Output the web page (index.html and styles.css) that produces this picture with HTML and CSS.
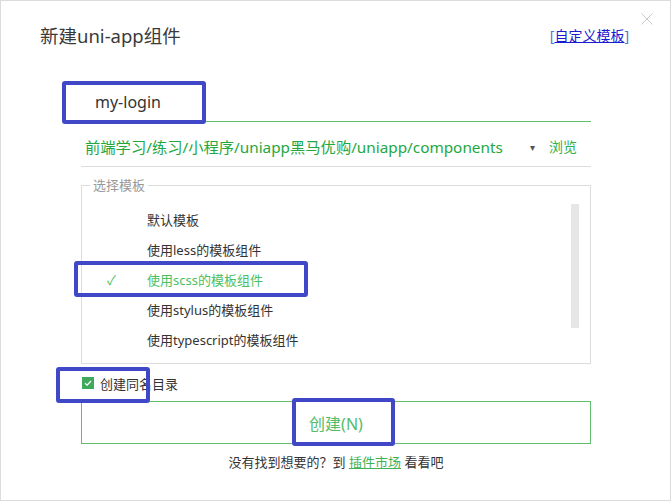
FILE: index.html
```html
<!DOCTYPE html>
<html>
<head>
    <title>新建uni-app组件</title>
    <link rel="stylesheet" href="styles.css">
</head>
<body>
<div class="dialog">
    <span class="close">
        <svg width="12" height="12" viewBox="0 0 12 12"><path d="M0.5 0.5L11.5 11.5M11.5 0.5L0.5 11.5" stroke="#c8c8c8" stroke-width="1" fill="none"/></svg>
    </span>
    <div class="head">
        <h1 class="title">新建uni-app组件</h1>
        <a class="custom-link"><span class="bracket">[</span><u>自定义模板</u><span class="bracket">]</span></a>
    </div>
    <form class="form">
        <div class="name-row">
            <span class="name-text">my-login</span>
        </div>
        <div class="path-row">
            <span class="path-text">前端学习/练习/小程序/uniapp黑马优购/uniapp/components</span>
            <span class="path-arrow">▾</span>
            <span class="browse">浏览</span>
        </div>
        <fieldset class="templates">
            <legend>选择模板</legend>
            <ul class="template-list">
                <li><span class="check"></span>默认模板</li>
                <li><span class="check"></span>使用less的模板组件</li>
                <li class="selected"><span class="check">✓</span>使用scss的模板组件</li>
                <li><span class="check"></span>使用stylus的模板组件</li>
                <li><span class="check"></span>使用typescript的模板组件</li>
            </ul>
            <div class="scrollbar"></div>
        </fieldset>
        <label class="dir-row">
            <span class="checkbox">
                <svg width="12" height="12" viewBox="0 0 12 12"><rect width="12" height="12" fill="#3ea95b"/><path d="M3 6.2L5.1 8.2L9 4" stroke="#fff" stroke-width="1.3" fill="none"/></svg>
            </span>
            创建同名目录
        </label>
        <button type="button" class="create-btn">创建(N)</button>
        <p class="footer-note">没有找到想要的？到 <a>插件市场</a> 看看吧</p>
    </form>

    <!-- highlight boxes drawn over the dialog -->
    <div class="mark mark-name"></div>
    <div class="mark mark-scss"></div>
    <div class="mark mark-dir"></div>
    <div class="mark mark-btn"></div>
</div>
</body>
</html>
```

FILE: styles.css
```css
body {
    margin: 0;
    font-family: "Noto Sans", "Noto Sans CJK SC", sans-serif;
    background-color: #fff;
    color: #333;
}
.dialog {
    position: relative;
    width: 671px;
    height: 501px;
    box-sizing: border-box;
    border: 1px solid #dcdcdc;
    background-color: #fff;
}
.close {
    position: absolute;
    top: 12px;
    right: 17px;
    width: 12px;
    height: 12px;
    line-height: 0;
}
.head {
    display: flex;
    justify-content: space-between;
    align-items: center;
    margin: 23px 41px 0 39px;
    height: 24px;
}
.title {
    margin: 0;
    font-size: 18.5px;
    font-weight: normal;
    line-height: 24px;
    color: #3a3a3a;
}
.custom-link {
    font-size: 14px;
    color: #1a1ad0;
    cursor: pointer;
    line-height: 20px;
}
.custom-link .bracket {
    color: #3c7fd6;
}
.form {
    margin: 0 79px 0 80px;
}
.name-row {
    margin-top: 34px;
    height: 39px;
    border-bottom: 1px solid #5fbf6d;
    display: flex;
    align-items: center;
    padding-left: 14px;
}
.name-text {
    font-size: 16px;
    color: #333;
}
.path-row {
    display: flex;
    align-items: center;
    padding: 10px 14px 4px 4px;
    line-height: 30px;
    border-bottom: 1px solid #dcdcdc;
    font-size: 15.3px;
}
.path-text {
    flex: 1;
    color: #23a83f;
}
.path-arrow {
    font-size: 10px;
    color: #555;
    margin-right: 14px;
}
.browse {
    color: #2fb04b;
    font-size: 14px;
}
.templates {
    margin: 10px 0 0 0;
    padding: 0;
    border: 1px solid #dcdcdc;
    display: flex;
    min-width: 0;
}
.templates legend {
    margin-left: 8px;
    padding: 0 3px;
    font-size: 13px;
    line-height: 16px;
    color: #999;
}
.template-list {
    list-style: none;
    margin: 0;
    padding: 11px 0 9px 25px;
    flex: 1;
}
.template-list li {
    display: flex;
    align-items: center;
    height: 30px;
    font-size: 13px;
    color: #333;
}
.template-list li.selected {
    color: #4cbf63;
}
.check {
    width: 40px;
    font-size: 13px;
    color: #4cbf63;
}
.scrollbar {
    width: 8px;
    height: 124px;
    margin: 11px 11px 0 0;
    background-color: #e6e6e6;
}
.dir-row {
    display: flex;
    align-items: center;
    gap: 6px;
    margin-top: 9px;
    height: 20px;
    font-size: 13px;
    color: #333;
    padding-left: 1px;
}
.checkbox {
    width: 12px;
    height: 12px;
    line-height: 0;
}
.create-btn {
    display: block;
    width: 100%;
    height: 43px;
    margin-top: 8px;
    border: 1px solid #5fbf6d;
    background-color: #fff;
    color: #55bb66;
    font-family: "Noto Sans", "Noto Sans CJK SC", sans-serif;
    font-size: 16px;
    padding: 0;
    cursor: pointer;
}
.footer-note {
    margin: 8px 0 0 0;
    text-align: center;
    font-size: 13px;
    line-height: 20px;
    color: #333;
}
.footer-note a {
    color: #3fb257;
    text-decoration: underline;
    cursor: pointer;
}
.mark {
    position: absolute;
    border: 4px solid #4048c8;
    border-radius: 3px;
    box-sizing: border-box;
}
.mark-name {
    left: 61px;
    top: 80px;
    width: 144px;
    height: 43px;
}
.mark-scss {
    left: 73px;
    top: 260px;
    width: 234px;
    height: 36px;
}
.mark-dir {
    left: 55px;
    top: 366px;
    width: 94px;
    height: 36px;
}
.mark-btn {
    left: 291px;
    top: 397px;
    width: 103px;
    height: 48px;
}
```
